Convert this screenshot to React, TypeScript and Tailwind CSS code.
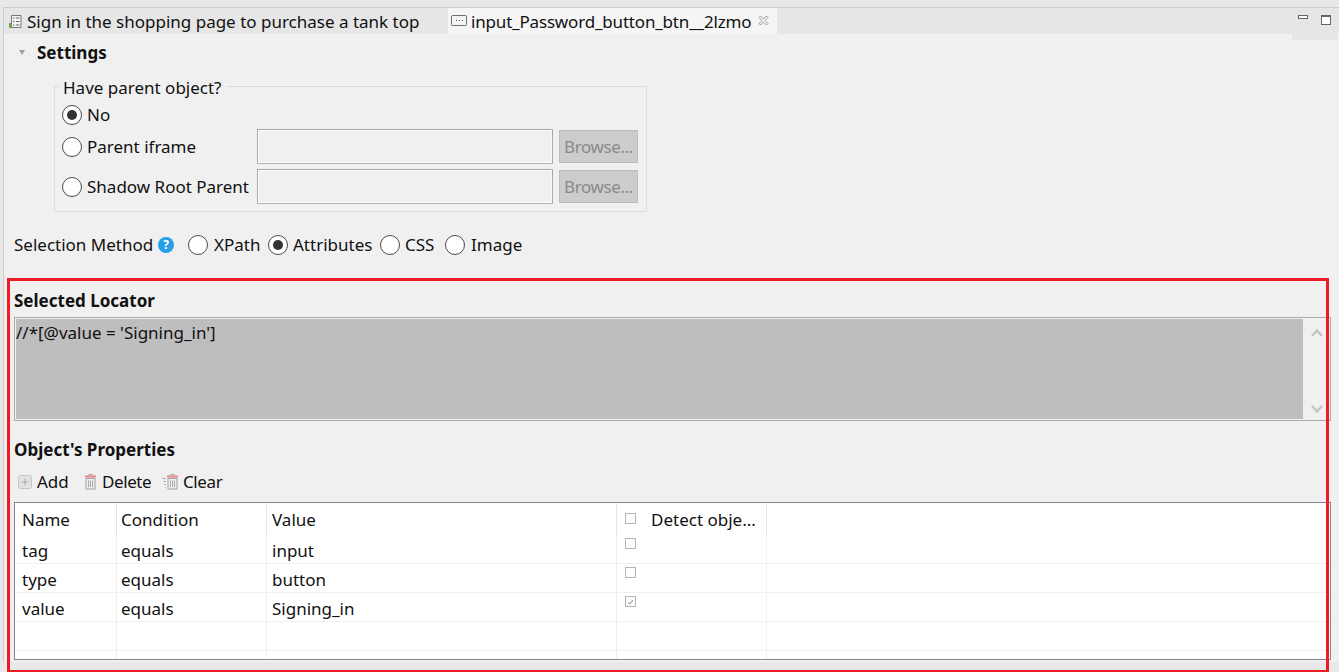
import type { ReactNode } from 'react';

const columns = ['w-[102px]', 'w-[150px]', 'w-[350px]', 'w-[150px]'];

const rows = [
  { name: 'tag', condition: 'equals', value: 'input', detect: false },
  { name: 'type', condition: 'equals', value: 'button', detect: false },
  { name: 'value', condition: 'equals', value: 'Signing_in', detect: true },
];

function Radio({ checked = false }: { checked?: boolean }) {
  return (
    <span className="flex h-[20px] w-[20px] shrink-0 items-center justify-center rounded-full border border-[#4a4a4a] bg-white">
      {checked && <span className="h-[10px] w-[10px] rounded-full bg-[#333333]" />}
    </span>
  );
}

function Check({ checked = false }: { checked?: boolean }) {
  return (
    <span className="flex h-[11px] w-[11px] items-center justify-center border border-[#b4b4b4] bg-[#fdfdfd]">
      {checked && (
        <svg width="7" height="6" viewBox="0 0 7 6" fill="none">
          <path d="M1 3.5 L2.7 5 L6 1" stroke="#8a8a8a" strokeWidth="1" />
        </svg>
      )}
    </span>
  );
}

function BrowseRow({ label }: { label: string }) {
  return (
    <div className="flex h-[35px] items-center">
      <Radio />
      <span className="ml-[5px] w-[170px]">{label}</span>
      <div className="h-[35px] w-[296px] border border-[#a9a9a9] border-b-[#b5b5b5] bg-[#f0f0f0] shadow-[inset_0_0_0_1px_#fafafa]" />
      <div className="ml-[6px] flex h-[33px] w-[79px] items-center justify-center border border-[#bdbdbd] bg-[#cccccc] tracking-[-0.4px] text-[#8a8a8a]">
        Browse...
      </div>
    </div>
  );
}

function TrashIcon({ lines = false }: { lines?: boolean }) {
  return (
    <svg width={lines ? 17 : 13} height="16" viewBox={lines ? '0 0 17 16' : '4 0 13 16'} fill="none">
      {lines && <path d="M0 4.5h4M1 7.5h3M2 10.5h2M3 13.5h1" stroke="#b0b0b0" />}
      <path d="M5 2.5h11" stroke="#e8868c" strokeWidth="2" />
      <path d="M8.5 1.5v-1h4v1" stroke="#a8a8a8" />
      <path d="M6 4.5h9v10.5h-9z" fill="#efefef" stroke="#a0a0a0" />
      <path d="M8.5 6.5v6.5M10.5 6.5v6.5M12.5 6.5v6.5" stroke="#a8a8a8" />
    </svg>
  );
}

function ToolButton({ icon, label, className }: { icon: ReactNode; label: string; className: string }) {
  return (
    <div className={`flex items-center ${className}`}>
      {icon}
      <span>{label}</span>
    </div>
  );
}

export default function App() {
  return (
    <div className="relative h-[672px] w-[1339px] overflow-hidden bg-[#e8e8e8] pl-[3px] pt-[7px] font-['Noto_Sans','Open_Sans',sans-serif] text-[17px] leading-[24px] text-[#111111]">
      <div className="h-[655px] border-l border-t border-[#cccccc] bg-[#f0f0f0]">
        {/* tab strip */}
        <div className="flex h-[26px] bg-[#e6e6e6]">
          <div className="flex w-[444px] items-center pl-[4px] pt-[2px]">
            <svg width="14" height="15" viewBox="0 0 14 15" fill="none" className="mr-[5px] mb-[2px]">
              <path d="M3.5 1.5h9.5v12h-9.5z" fill="#f4f4f4" stroke="#777777" />
              <path d="M5 4h1.5M5 7.5h1.5M5 11h1.5M8 4h3.5M8 7.5h3.5M8 11h3.5" stroke="#666666" />
              <path d="M1 9h2.5v5h-2.5z" fill="#6fa84e" />
            </svg>
            <span>Sign in the shopping page to purchase a tank top</span>
          </div>
          <div className="flex w-[329px] items-center bg-[#f5f5f5] pl-[3px] pt-[2px]">
            <svg width="16" height="12" viewBox="0 0 16 12" fill="none" className="mr-[4px] mb-[2px]">
              <rect x="0.5" y="0.5" width="15" height="10" rx="1" fill="#f4f4f4" stroke="#6e6e6e" />
              <path d="M5 5.5h1M8 5.5h1M11 5.5h1" stroke="#555555" />
            </svg>
            <span className="tracking-[-0.18px]">input_Password_button_btn__2lzmo</span>
            <svg width="11" height="11" viewBox="0 0 11 11" fill="none" className="ml-[7px] mb-[3px]">
              <path d="M1 2.5 2.5 1 5.5 4 8.5 1 10 2.5 7 5.5 10 8.5 8.5 10 5.5 7 2.5 10 1 8.5 4 5.5z" fill="#f5f5f5" stroke="#9a9a9a" />
            </svg>
          </div>
          <div className="relative flex-1">
            <div className="absolute left-[515px] top-0 flex h-[32px] w-[45px] bg-[#e6e6e6] pl-[6px] pt-[7px]">
              <span className="h-[4px] w-[10px] border border-[#666666] bg-white" />
              <span className="ml-[13px] h-[10px] w-[10px] border border-t-2 border-[#666666] bg-white" />
            </div>
          </div>
        </div>

        <div className="flex h-[37px] items-center pl-[15px] pt-[1px]">
          <svg width="6" height="5" viewBox="0 0 6 5" className="mb-[2px]">
            <path d="M0 0h6l-3 5z" fill="#a0a0a0" />
          </svg>
          <span className="ml-[12px] font-bold">Settings</span>
        </div>

        {/* parent object group */}
        <div className="relative ml-[50px] mt-[15px] h-[126px] w-[593px] border border-[#dcdcdc] pl-[7px] pr-[8px] pt-[14px]">
          <span className="absolute left-[4px] top-[-11px] bg-[#f0f0f0] px-[4px]">Have parent object?</span>
          <div className="flex h-[28px] items-center">
            <Radio checked />
            <span className="ml-[5px]">No</span>
          </div>
          <div className="flex flex-col gap-[5px]">
            <BrowseRow label="Parent iframe" />
            <BrowseRow label="Shadow Root Parent" />
          </div>
        </div>

        {/* selection method */}
        <div className="mt-[20px] flex h-[26px] items-center pl-[10px]">
          <span className="w-[144px]">Selection Method</span>
          <span className="flex h-[16px] w-[16px] items-center justify-center rounded-full bg-[#2a9fe8] text-[12px] font-bold text-white">?</span>
          <span className="ml-[14px]"><Radio /></span>
          <span className="ml-[6px] w-[54px]">XPath</span>
          <Radio checked />
          <span className="ml-[5px] w-[87px]">Attributes</span>
          <Radio />
          <span className="ml-[5px] w-[40px]">CSS</span>
          <Radio />
          <span className="ml-[6px]">Image</span>
        </div>

        <div className="mt-[31px] pl-[10px] font-bold">Selected Locator</div>

        {/* locator text area */}
        <div className="mr-[8px] ml-[10px] mt-[4px] flex h-[104px] border border-[#aaaaaa] p-px">
          <div className="flex-1 bg-[#bebebe] pt-[2px]">{"//*[@value = 'Signing_in']"}</div>
          <div className="ml-px flex w-[25px] flex-col items-center justify-between bg-[#f0f0f0] pb-[5px] pt-[9px]">
            <svg width="12" height="9" viewBox="0 0 12 9" fill="none">
              <path d="M1 8 6 2.5 11 8" stroke="#c4c4c4" strokeWidth="2.4" />
            </svg>
            <svg width="12" height="9" viewBox="0 0 12 9" fill="none">
              <path d="M1 1 6 6.5 11 1" stroke="#c4c4c4" strokeWidth="2.4" />
            </svg>
          </div>
        </div>

        <div className="mt-[17px] pl-[10px] font-bold">Object's Properties</div>

        {/* toolbar */}
        <div className="mt-[8px] flex h-[24px] items-center pl-[14px]">
          <ToolButton
            className="w-[66px] gap-[5px]"
            label="Add"
            icon={
              <svg width="14" height="14" viewBox="0 0 14 14" fill="none">
                <rect x="0.5" y="0.5" width="13" height="13" rx="2" fill="#e2e2e2" stroke="#c4c4c4" />
                <path d="M7 3.5v7M3.5 7h7" stroke="#a8a8a8" />
              </svg>
            }
          />
          <ToolButton className="w-[78px] gap-[5px] tracking-[-0.4px]" label="Delete" icon={<TrashIcon />} />
          <ToolButton className="gap-[4px] tracking-[-0.4px]" label="Clear" icon={<TrashIcon lines />} />
        </div>

        {/* properties table */}
        <div className="mr-[8px] ml-[10px] mt-[8px] h-[158px] overflow-hidden border border-[#85858f] bg-white">
          <div className="flex h-[32px]">
            <div className={`${columns[0]} mt-px border-r border-[#e6e6e6] pl-[7px] pt-[4px]`}>Name</div>
            <div className={`${columns[1]} mt-px border-r border-[#e6e6e6] pl-[4px] pt-[4px]`}>Condition</div>
            <div className={`${columns[2]} mt-px border-r border-[#e6e6e6] pl-[5px] pt-[4px]`}>Value</div>
            <div className={`${columns[3]} mt-px flex border-r border-[#e6e6e6] pl-[8px] pt-[4px]`}>
              <span className="mt-[5px]"><Check /></span>
              <span className="ml-[15px]">Detect obje...</span>
            </div>
          </div>
          {rows.map((row) => (
            <div key={row.name} className="flex h-[29px] border-b border-[#f0f0f0]">
              <div className={`${columns[0]} border-r border-[#f0f0f0] pl-[7px] pt-[4px]`}>{row.name}</div>
              <div className={`${columns[1]} border-r border-[#f0f0f0] pl-[4px] pt-[4px]`}>{row.condition}</div>
              <div className={`${columns[2]} border-r border-[#f0f0f0] pl-[5px] pt-[4px]`}>{row.value}</div>
              <div className={`${columns[3]} border-r border-[#f0f0f0] pl-[8px] pt-[3px]`}>
                <Check checked={row.detect} />
              </div>
            </div>
          ))}
          {[29, 8].map((height, i) => (
            <div key={i} className={`flex ${height === 29 ? 'h-[29px] border-b border-[#f0f0f0]' : 'h-[8px]'}`}>
              {columns.map((col) => (
                <div key={col} className={`${col} border-r border-[#f0f0f0]`} />
              ))}
            </div>
          ))}
        </div>
      </div>

      {/* red annotation box drawn over the screenshot */}
      <div className="absolute left-[7px] top-[278px] h-[395px] w-[1322px] border-[3px] border-[#ed1c24]" />
    </div>
  );
}
